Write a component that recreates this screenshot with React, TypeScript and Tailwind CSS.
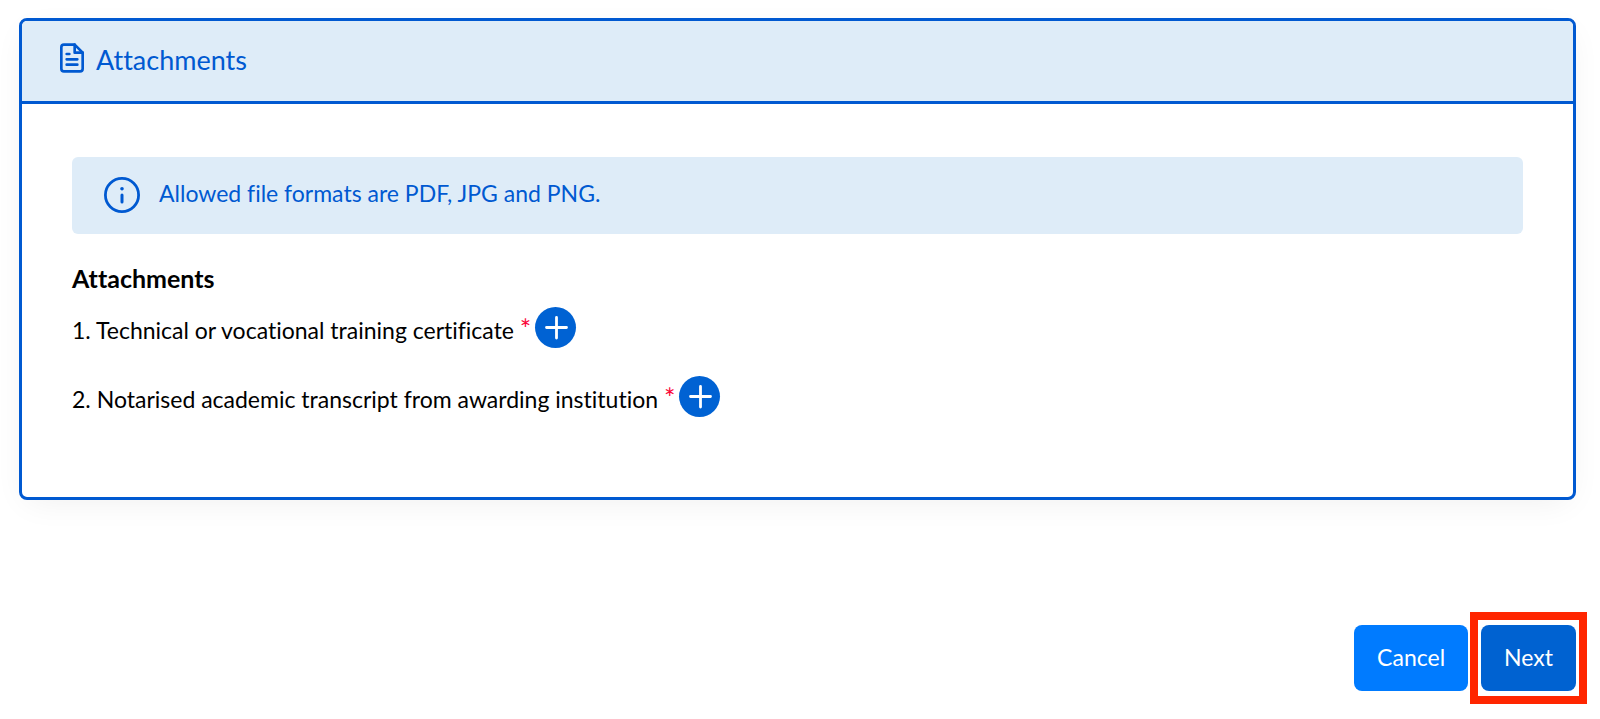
import React from "react";

function FileIcon() {
  return (
    <svg className="size-8 shrink-0" viewBox="0 0 24 24" fill="none" stroke="currentColor" strokeWidth="2" strokeLinecap="round" strokeLinejoin="round" aria-hidden="true">
      <path d="M14 2H6a2 2 0 0 0-2 2v16a2 2 0 0 0 2 2h12a2 2 0 0 0 2-2V8z" />
      <path d="M14 2v6h6" />
      <path d="M16 13H8M16 17H8M10 9H8" />
    </svg>
  );
}

function InfoIcon() {
  return (
    <svg className="size-9 shrink-0" viewBox="0 0 36 36" fill="none" stroke="currentColor" aria-hidden="true">
      <circle cx="18" cy="18" r="16.6" strokeWidth="2.8" />
      <circle cx="18" cy="11.7" r="1.8" fill="currentColor" stroke="none" />
      <path d="M18 18v7" strokeWidth="3" strokeLinecap="round" />
    </svg>
  );
}

function PlusIcon() {
  return (
    <svg className="size-10" viewBox="0 0 40 40" fill="none" stroke="currentColor" strokeWidth="2.8" strokeLinecap="round" aria-hidden="true">
      <path d="M20.5 9.5V30M10.5 19.5h20" />
    </svg>
  );
}

const attachments = [
  "Technical or vocational training certificate",
  "Notarised academic transcript from awarding institution",
];

export default function App() {
  return (
    <main className="bg-white pt-[18px] pr-6 pb-7 pl-[19px] font-['Lato','Noto_Sans',sans-serif] text-[23px] leading-8 text-black [font-variant-ligatures:none]">
      <section className="overflow-hidden rounded-lg border-3 border-[#0059d1] bg-white shadow-[0_8px_32px_-8px_rgba(0,0,0,0.07)]">
        <header className="flex h-[83px] items-center gap-2 border-b-3 border-[#0059d1] bg-[#deecf8] px-[34px] pb-[6px] text-[#0059d1]">
          <FileIcon />
          <h1 className="pt-1 text-[27px] leading-8">Attachments</h1>
        </header>
        <div className="px-[50px] pt-[53px] pb-20">
          <div className="flex items-center gap-[19px] rounded-md bg-[#deecf8] px-8 pt-5 pb-[21px] text-[#0059d1]">
            <InfoIcon />
            <p className="pb-1">Allowed file formats are PDF, JPG and PNG.</p>
          </div>
          <h2 className="mt-7 text-[25px] leading-8 font-bold">Attachments</h2>
          <ol className="mt-[13px] flex flex-col gap-7">
            {attachments.map((name, i) => (
              <li key={name} className="flex items-center gap-1">
                <span className="pt-1">
                  {i + 1}. {name} <span className="text-[27px] leading-none text-[#fa0538]">*</span>
                </span>
                <button type="button" aria-label={`Add ${name}`} className="flex size-[41px] shrink-0 items-center justify-center rounded-full bg-[#0062d3] text-white">
                  <PlusIcon />
                </button>
              </li>
            ))}
          </ol>
        </div>
      </section>
      <div className="mt-[125px] flex justify-end gap-[13px] text-white">
        <button type="button" className="h-[66px] rounded-lg bg-[#007bff] px-[23px] pb-[2px]">Cancel</button>
        <div className="relative">
          <button type="button" className="h-[66px] rounded-lg bg-[#0062d1] px-[23px] pb-[2px]">Next</button>
          <span className="pointer-events-none absolute -inset-x-[11px] -inset-y-[13px] border-8 border-[#ff2600]" />
        </div>
      </div>
    </main>
  );
}
